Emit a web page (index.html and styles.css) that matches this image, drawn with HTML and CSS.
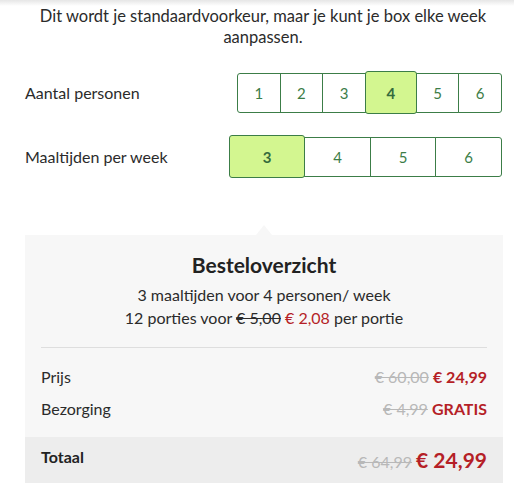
FILE: index.html
```html
<!DOCTYPE html>
<html lang="nl">
<head>
    <meta charset="UTF-8">
    <meta name="viewport" content="width=device-width, initial-scale=1.0">
    <title>Box samenstellen</title>
    <link rel="stylesheet" href="styles.css">
</head>
<body>

    <!-- Intro -->
    <p class="intro">Dit wordt je standaardvoorkeur, maar je kunt je box elke week aanpassen.</p>

    <!-- Keuzes -->
    <div class="option-row">
        <span class="option-label">Aantal personen</span>
        <div class="choice-group persons">
            <button class="choice">1</button>
            <button class="choice">2</button>
            <button class="choice">3</button>
            <button class="choice selected">4</button>
            <button class="choice">5</button>
            <button class="choice">6</button>
        </div>
    </div>

    <div class="option-row">
        <span class="option-label">Maaltijden per week</span>
        <div class="choice-group meals">
            <button class="choice selected">3</button>
            <button class="choice">4</button>
            <button class="choice">5</button>
            <button class="choice">6</button>
        </div>
    </div>

    <!-- Besteloverzicht -->
    <div class="summary">
        <div class="summary-head">
            <h2>Besteloverzicht</h2>
            <p>3 maaltijden voor 4 personen/ week</p>
            <p>12 porties voor <s class="old-dark">€ 5,00</s> <span class="red">€ 2,08</span> per portie</p>
        </div>
        <div class="summary-lines">
            <div class="line">
                <span>Prijs</span>
                <span><s class="old">€ 60,00</s> <b class="red">€ 24,99</b></span>
            </div>
            <div class="line">
                <span>Bezorging</span>
                <span><s class="old">€ 4,99</s> <b class="red">GRATIS</b></span>
            </div>
        </div>
        <div class="total">
            <span class="total-label">Totaal</span>
            <span class="total-value"><s class="old">€ 64,99</s> <b class="red">€ 24,99</b></span>
        </div>
    </div>

</body>
</html>
```

FILE: styles.css
```css
body, html {
    margin: 0;
    padding: 0;
    background: #fff;
    font-family: 'Lato', 'Noto Sans', sans-serif;
    color: #2b2b2b;
}
.intro {
    margin: 0;
    padding: 6px 13px 0 25px;
    height: 44px;
    background: linear-gradient(#e6e6e6, #fff 6px);
    text-align: center;
    font-size: 16.5px;
    line-height: 21px;
}
.option-row {
    display: flex;
    align-items: center;
    height: 43px;
    margin-top: 21px;
    padding: 0 12px 0 25px;
}
.option-label {
    font-size: 16px;
}
.choice-group {
    display: flex;
    align-items: center;
    margin-left: auto;
}
.persons { width: 265px; }
.meals { width: 273px; }
.choice {
    flex: 1;
    height: 40px;
    margin: 0 0 0 -1px;
    padding: 0;
    background: #fff;
    border: 1px solid #3c7d47;
    font-family: inherit;
    font-size: 15px;
    color: #3c7d47;
    cursor: pointer;
}
.choice:first-child {
    margin-left: 0;
    border-radius: 3px 0 0 3px;
}
.choice:last-child { border-radius: 0 3px 3px 0; }
.choice.selected {
    position: relative;
    z-index: 1;
    height: 43px;
    flex: 1.2;
    background: #d3f690;
    border-radius: 3px;
    font-weight: bold;
    color: #356b3d;
}
.meals .choice.selected { flex: 1.15; }

/* overzicht */
.summary {
    position: relative;
    margin: 57px 11px 0 25px;
    background: #f7f7f7;
}
.summary::before {
    content: '';
    position: absolute;
    top: -10px;
    left: 231px;
    border: 8px solid transparent;
    border-top: 0;
    border-bottom: 10px solid #f7f7f7;
}
.summary-head {
    margin: 0 16px;
    padding: 18px 0 18px;
    border-bottom: 1px solid #dedede;
    text-align: center;
}
.summary-head h2 {
    margin: 0 0 6px;
    font-size: 21px;
    line-height: 24px;
    color: #222;
}
.summary-head p {
    margin: 0;
    font-size: 16px;
    line-height: 23px;
}
.summary-lines {
    padding: 13px 16px 12px;
}
.line {
    display: flex;
    justify-content: space-between;
    font-size: 16px;
    line-height: 32px;
}
.old { color: #b8b8b8; }
.old-dark { color: #2b2b2b; }
.red { color: #b51f27; }
.total {
    display: flex;
    align-items: flex-start;
    justify-content: space-between;
    height: 46px;
    box-sizing: border-box;
    padding: 10px 16px 0;
    background: #ededed;
}
.total-label {
    font-size: 16px;
    line-height: 20px;
    font-weight: bold;
    color: #222;
}
.total-value {
    font-size: 16px;
    line-height: 26px;
}
.total-value b { font-size: 21px; }
```
